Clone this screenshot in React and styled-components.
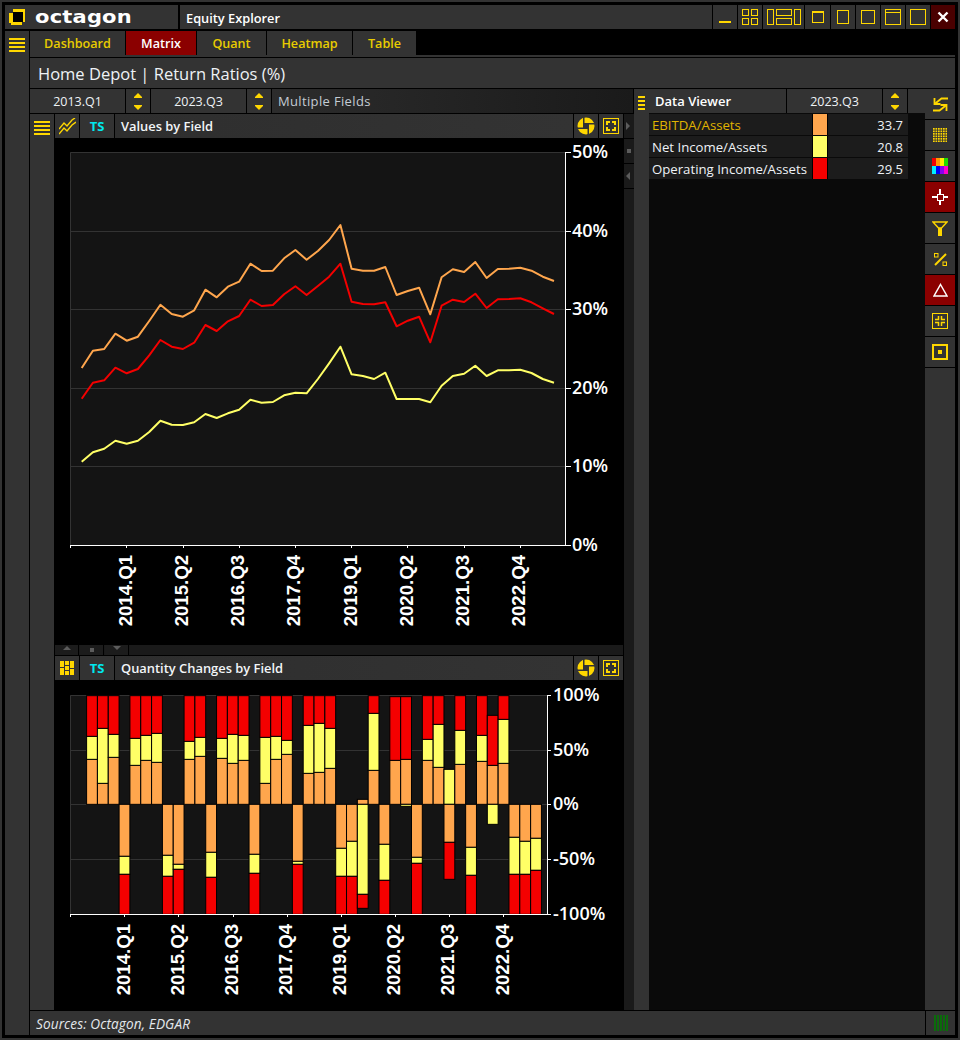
import styled, { createGlobalStyle } from "styled-components";

const GOLD = "#ffd700";
const ORANGE = "#ffa64d";
const YELLOW = "#ffff66";
const RED = "#f40000";

const GlobalStyle = createGlobalStyle`
  html, body { margin: 0; padding: 0; background: #000; }
  * { box-sizing: border-box; }
  body { font-family: "Open Sans", "Noto Sans", sans-serif; color: #fff; }
`;

// y positions read off the picture, 3x from y=200
const orangeLine = [504,452,447,401,422,410,363,314,342,350,331,269,292,260,245,191,213,212,175,150,179,153,120,75,206,212,212,201,285,273,263,343,232,208,216,186,234,207,206,203,212,230,243];
const redLine = [596,548,541,503,520,507,466,420,440,447,428,375,393,364,348,299,318,315,283,259,285,258,230,191,305,312,313,307,379,362,350,427,317,299,306,281,324,298,297,295,307,325,342];
const yellowLine = [785,757,746,722,731,722,696,662,674,675,667,642,654,640,629,599,608,606,586,578,580,537,490,440,523,528,537,518,597,597,597,607,557,528,521,497,528,511,511,509,519,537,548];

// each bar: [up stack ends], [down stack ends], in orange, yellow, red order, 3x from y=680
const ZERO = 373;
const up = (o, y, r) => [[o, y, r], null];
const dn = (o, y, r) => [null, [o, y, r]];
const bars = [
  up(238,169,47), up(310,145,47), up(232,163,47), dn(529,583,703), up(256,175,47), up(241,166,47), up(247,160,47),
  dn(526,589,703), dn(553,568,703), up(238,184,47), up(229,172,47), dn(517,592,703), up(235,175,47), up(250,163,47),
  up(241,166,47), dn(523,580,703), up(310,172,47), up(238,169,47), up(223,181,47), dn(544,553,703), up(280,136,47),
  up(277,130,47), up(265,145,47), dn(505,589,703), dn(484,589,703), [[358,358,358],[373,643,685]], up(271,100,47),
  dn(493,601,703), up(241,241,50), [[238,238,50],[373,379,379]], dn(532,550,703), up(241,178,47), up(262,133,47),
  [[373,268,268],[487,487,598]], up(253,151,47), dn(502,586,703), up(244,166,47), [[256,256,106],[373,433,433]],
  up(250,118,47), dn(472,583,703), dn(484,583,703), dn(475,571,703),
];

const xLabels = ["2014.Q1", "2015.Q2", "2016.Q3", "2017.Q4", "2019.Q1", "2020.Q2", "2021.Q3", "2022.Q4"];

const Window = styled.div`
  width: 960px;
  height: 1040px;
  border: 2px solid #333;
  padding: 3px;
  background: #000;
  display: flex;
  flex-direction: column;
  gap: 2px;
  overflow: hidden;
`;

const TitleBar = styled.div`
  height: 24px;
  display: flex;
  gap: 1px;
  flex: none;
`;

const LogoCell = styled.div`
  width: 173px;
  margin-right: 1px;
  background: #333;
  display: flex;
  align-items: center;
  padding-left: 4px;
  gap: 9px;
`;

const LogoText = styled.span`
  font-family: "DejaVu Sans", sans-serif;
  font-weight: 700;
  font-size: 21px;
  line-height: 24px;
  letter-spacing: 0.2px;
  width: 97px;
  display: inline-block;
  transform: scaleY(0.82);
  transform-origin: center;
`;

const AppName = styled.div`
  flex: 1;
  background: #333;
  padding-left: 6px;
  font-size: 12.8px;
  font-weight: 600;
  line-height: 24px;
  padding-top: 0.5px;
`;

const WinButton = styled.div`
  width: ${(p) => p.$w || 24}px;
  background: ${(p) => (p.$close ? "#4a0000" : "#333")};
  display: flex;
  align-items: center;
  justify-content: center;
`;

const Body = styled.div`
  flex: 1;
  display: flex;
  gap: 1px;
  min-height: 0;
`;

const LeftRail = styled.div`
  width: 24px;
  background: #333;
  display: flex;
  justify-content: center;
  padding-top: 7px;
`;

const Main = styled.div`
  flex: 1;
  display: flex;
  flex-direction: column;
  min-width: 0;
`;

const TabStrip = styled.div`
  height: 26px;
  display: flex;
  border-bottom: 2px solid #333;
  flex: none;
`;

const Tab = styled.div`
  width: ${(p) => p.$w}px;
  height: 24px;
  margin-right: 1px;
  background: ${(p) => (p.$active ? "#8b0000" : "#333")};
  color: ${(p) => (p.$active ? "#fff" : "#e8cc00")};
  font-size: 12.6px;
  font-weight: 600;
  line-height: 25px;
  text-align: center;
`;

const PageTitle = styled.div`
  height: 30px;
  margin-top: 1px;
  background: #333;
  font-size: 16.5px;
  line-height: 32px;
  padding-left: 8px;
  flex: none;
  color: #eef2f6;
`;

const Content = styled.div`
  flex: 1;
  margin-top: 1px;
  display: flex;
  min-height: 0;
`;

const LeftPane = styled.div`
  width: 603px;
  display: flex;
  flex-direction: column;
`;

const SelectorRow = styled.div`
  height: 24px;
  display: flex;
  gap: 1px;
  flex: none;
`;

const PeriodCell = styled.div`
  width: ${(p) => p.$w || 95}px;
  background: #333;
  font-size: 12.5px;
  line-height: 25px;
  text-align: center;
  color: #eef2f6;
`;

const SpinCell = styled.div`
  width: 24px;
  background: #333;
  display: flex;
  align-items: center;
  justify-content: center;
`;

const FieldCell = styled.div`
  flex: 1;
  background: linear-gradient(90deg, #2c2c2c, #1a1a1a);
  font-size: 13px;
  letter-spacing: 0.35px;
  line-height: 25px;
  padding-left: 6px;
  color: #c4ccd4;
`;

const PaneBody = styled.div`
  flex: 1;
  margin-top: 1px;
  display: flex;
  min-height: 0;
`;

const Gutter = styled.div`
  width: 24px;
  margin-right: 1px;
  background: #333;
  display: flex;
  justify-content: center;
  padding-top: 7px;
  flex: none;
`;

const ChartColumn = styled.div`
  width: 568px;
  display: flex;
  flex-direction: column;
  flex: none;
`;

const PanelHeader = styled.div`
  height: 24px;
  display: flex;
  gap: 1px;
  flex: none;
`;

const HeaderIcon = styled.div`
  width: ${(p) => p.$w || 24}px;
  background: #333;
  display: flex;
  align-items: center;
  justify-content: center;
`;

const TsCell = styled.div`
  width: 34px;
  background: #333;
  color: #00e8ee;
  font-size: 13px;
  font-weight: 700;
  line-height: 25px;
  text-align: center;
`;

const PanelTitle = styled.div`
  flex: 1;
  background: linear-gradient(90deg, #2e2e2e, #333);
  font-size: 12.9px;
  font-weight: 600;
  line-height: 25px;
  padding-left: 6px;
  color: #f2f5f8;
`;

const ChartSvg = styled.svg`
  display: block;
  flex: none;
`;

const HSplit = styled.div`
  height: 10px;
  margin-bottom: 1px;
  background: #1a1a1a;
  display: flex;
  gap: 1px;
  flex: none;
`;

const HSplitCell = styled.div`
  width: 24px;
  background: #1c1c1c;
  border-right: 1px solid #000;
  display: flex;
  align-items: center;
  justify-content: center;
`;

const VStrip = styled.div`
  width: 10px;
  margin-left: 1px;
  background: #1a1a1a;
  display: flex;
  flex-direction: column;
  flex: none;
`;

const VStripCell = styled.div`
  height: 25px;
  border-bottom: 1px solid #000;
  display: flex;
  align-items: center;
  justify-content: center;
`;

const VSplit = styled.div`
  width: 15px;
  margin-left: 1px;
  background: #333;
  display: flex;
  justify-content: center;
  padding-top: 7px;
  flex: none;
`;

const RightPane = styled.div`
  width: 276px;
  background: #0a0a0a;
  margin-left: 0;
  flex: none;
`;

const ViewerHeader = styled.div`
  height: 24px;
  display: flex;
  gap: 1px;
  margin-bottom: 1px;
  background: #000;
`;

const ViewerTitle = styled.div`
  width: 137px;
  background: #333;
  font-size: 13px;
  font-weight: 600;
  line-height: 25px;
  padding-left: 6px;
`;

const ViewerRow = styled.div`
  width: 259px;
  height: 21px;
  margin-bottom: 1px;
  display: flex;
  gap: 1px;
  background: #000;
`;

const RowName = styled.div`
  width: 163px;
  background: #1c1c1c;
  font-size: 13.2px;
  line-height: 23px;
  padding-left: 3px;
  white-space: nowrap;
  color: ${(p) => (p.$hi ? "#e0b400" : "#eef2f6")};
`;

const Swatch = styled.div`
  width: 14px;
  background: ${(p) => p.$c};
`;

const RowValue = styled.div`
  flex: 1;
  background: #1c1c1c;
  font-size: 13px;
  line-height: 23px;
  text-align: right;
  padding-right: 5px;
  color: #eef2f6;
`;

const RightRail = styled.div`
  width: 30px;
  background: #333;
  display: flex;
  flex-direction: column;
  flex: none;
`;

const RailButton = styled.div`
  height: 31px;
  border-bottom: 1px solid #000;
  background: ${(p) => (p.$on ? "#8b0000" : "#333")};
  display: flex;
  align-items: center;
  justify-content: center;
`;

const StatusBar = styled.div`
  height: 24px;
  margin-top: 1px;
  display: flex;
  gap: 1px;
  flex: none;
`;

const StatusText = styled.div`
  flex: 1;
  background: #333;
  font-size: 13.6px;
  font-style: italic;
  letter-spacing: 0.1px;
  line-height: 25px;
  padding-left: 6px;
  color: #e4e8ec;
`;

const StatusLed = styled.div`
  width: 29px;
  background: #333;
  display: flex;
  align-items: center;
  justify-content: center;
`;

const AxisValue = styled.text`
  font-family: "Open Sans", sans-serif;
  font-weight: 600;
  font-size: ${(p) => p.$size}px;
  fill: #fff;
  dominant-baseline: central;
`;

const AxisDate = styled.text`
  font-family: "Liberation Sans", sans-serif;
  font-weight: 700;
  font-size: ${(p) => p.$size}px;
  fill: #fff;
  text-anchor: end;
  dominant-baseline: central;
`;

function Hamburger({ bars = 4 }) {
  return (
    <svg width="16" height="14" viewBox="0 0 16 14" fill={GOLD}>
      {Array.from({ length: bars }, (_, i) => (
        <rect key={i} x="0" y={i * 4} width="16" height="2" />
      ))}
    </svg>
  );
}

function MiniBurger() {
  return (
    <svg width="7" height="14" viewBox="0 0 7 14" fill={GOLD}>
      {[0, 4, 8, 12].map((y) => (
        <rect key={y} x="0" y={y} width="7" height="2" />
      ))}
    </svg>
  );
}

function LogoMark() {
  return (
    <svg width="17" height="16" viewBox="0 0 17 16" shapeRendering="crispEdges">
      <path d="M4 0H16V13H13V16H2V14H0V4H4Z" fill={GOLD} />
      <rect x="4" y="3" width="10" height="10" fill="#000" />
    </svg>
  );
}

function Spinner() {
  return (
    <svg width="10" height="17" viewBox="0 0 10 17" fill={GOLD}>
      <path d="M5 0L9 4V5H1V4Z" />
      <path d="M1 12H9V13L5 17L1 13Z" />
    </svg>
  );
}

function LineIcon() {
  return (
    <svg width="17" height="17" viewBox="0 0 17 17" fill="none" stroke={GOLD} strokeWidth="1.4">
      <path d="M0 11L5 5L8 8L13 2L16 0" />
      <path d="M0 16L5 10L8 13L13 7L17 4" />
    </svg>
  );
}

function TileIcon() {
  return (
    <svg width="15" height="15" viewBox="0 0 15 15" fill={GOLD}>
      <rect x="0" y="0" width="4" height="6" />
      <rect x="0" y="7" width="4" height="7" />
      <rect x="5" y="0" width="4" height="4" />
      <rect x="5" y="5" width="4" height="4" />
      <rect x="5" y="10" width="4" height="4" />
      <rect x="10" y="0" width="4" height="7" />
      <rect x="10" y="8" width="4" height="6" />
    </svg>
  );
}

function ApertureIcon() {
  return (
    <svg width="18" height="18" viewBox="0 0 18 18">
      <circle cx="9" cy="9" r="8.5" fill={GOLD} />
      <rect x="6" y="6" width="6" height="6" fill="#333" />
      <rect x="6" y="0" width="1.5" height="6" fill="#333" />
      <rect x="12" y="6" width="6" height="1.5" fill="#333" />
      <rect x="10.5" y="12" width="1.5" height="6" fill="#333" />
      <rect x="0" y="10.5" width="6" height="1.5" fill="#333" />
    </svg>
  );
}

function ExpandIcon() {
  return (
    <svg width="16" height="16" viewBox="0 0 16 16" fill="none" stroke={GOLD} shapeRendering="crispEdges">
      <rect x="0.5" y="0.5" width="15" height="15" />
      <path d="M4 7V4H7M9 4H12V7M12 9V12H9M7 12H4V9" strokeWidth="2" />
    </svg>
  );
}

function Tri({ dir, c = "#5c5c5c" }) {
  const d = {
    up: "M0 4L4 0L8 4Z",
    down: "M0 0H8L4 4Z",
    right: "M1 0L5 4L1 8Z",
    left: "M5 0V8L1 4Z",
  }[dir];
  return (
    <svg width="8" height="8" viewBox="0 0 8 8" fill={c} style={{ overflow: "visible" }}>
      <path d={d} />
    </svg>
  );
}

function Dot() {
  return <svg width="4" height="4"><rect width="4" height="4" fill="#5c5c5c" /></svg>;
}

function WinIcon({ w = 16, h = 16, children }) {
  return (
    <svg width={w} height={h} viewBox={`0 0 ${w} ${h}`} fill="none" stroke={GOLD} strokeWidth="1">
      {children}
    </svg>
  );
}

function PaletteIcon() {
  const colors = ["#f00000", "#ff9900", "#ffee00", "#22dd00", "#00eeff", "#0000ee", "#8800ee", "#ff00cc"];
  return (
    <svg width="16" height="16" viewBox="0 0 16 16" shapeRendering="crispEdges">
      {colors.map((c, i) => (
        <rect key={c} x={(i % 4) * 4} y={i < 4 ? 0 : 8} width="4" height="8" fill={c} />
      ))}
    </svg>
  );
}

function DotGridIcon() {
  const dots = [];
  for (let r = 0; r < 6; r++) {
    for (let c = 0; c < 6; c++) dots.push(<rect key={`${r}-${c}`} x={c * 2.5} y={r * 2.5} width="1.7" height="1.7" />);
  }
  return <svg width="14" height="14" viewBox="0 0 14 14" fill={GOLD}>{dots}</svg>;
}

function SyncIcon() {
  return (
    <svg width="15" height="15" viewBox="0 0 15 15" fill="none" stroke={GOLD} strokeWidth="1.8">
      <path d="M15 1.5H8.5L1.5 7" />
      <path d="M1.5 1V7H7.5" />
      <path d="M0 13.5H6.5L13.5 8" />
      <path d="M13.5 14V8H7.5" />
    </svg>
  );
}

function CrossIcon() {
  return (
    <svg width="16" height="16" viewBox="0 0 16 16" fill="#fff" shapeRendering="crispEdges">
      <rect x="7" y="0" width="2" height="5" />
      <rect x="7" y="11" width="2" height="5" />
      <rect x="0" y="7" width="5" height="2" />
      <rect x="11" y="7" width="5" height="2" />
      <rect x="5" y="5" width="6" height="6" fill="none" stroke="#fff" />
    </svg>
  );
}

function FunnelIcon() {
  return (
    <svg width="16" height="15" viewBox="0 0 16 15">
      <path d="M1 1H15L9.5 7H6.5Z" fill="none" stroke={GOLD} strokeWidth="1.4" />
      <rect x="6" y="7" width="4" height="8" fill={GOLD} />
    </svg>
  );
}

function PercentIcon() {
  return (
    <svg width="13" height="13" viewBox="0 0 13 13" fill="none" stroke={GOLD}>
      <path d="M1 12L12 1" strokeWidth="2" />
      <rect x="0.5" y="0.5" width="3.5" height="3.5" />
      <rect x="9" y="9" width="3.5" height="3.5" />
    </svg>
  );
}

function DeltaIcon() {
  return (
    <svg width="15" height="14" viewBox="0 0 15 14">
      <path d="M7.5 1.5L14 13H1Z" fill="none" stroke="#fff" strokeWidth="1.5" />
    </svg>
  );
}

function ShrinkIcon() {
  return (
    <svg width="16" height="16" viewBox="0 0 16 16" fill="none" stroke={GOLD}>
      <rect x="0.5" y="0.5" width="15" height="15" />
      <path d="M6.5 3V6.5H3M9.5 3V6.5H13M6.5 13V9.5H3M9.5 13V9.5H13" strokeWidth="1.5" />
    </svg>
  );
}

function TargetIcon() {
  return (
    <svg width="16" height="16" viewBox="0 0 16 16" fill="none">
      <rect x="1" y="1" width="14" height="14" stroke={GOLD} strokeWidth="2" />
      <rect x="6" y="6" width="4" height="4" fill={GOLD} />
    </svg>
  );
}

function PanelIcons() {
  return (
    <>
      <HeaderIcon><ApertureIcon /></HeaderIcon>
      <HeaderIcon><ExpandIcon /></HeaderIcon>
    </>
  );
}

function LinePath({ data, color }) {
  const points = data.map((v, i) => `${(81.7 + i * 11.246).toFixed(1)},${(200 + v / 3).toFixed(1)}`).join(" ");
  return <polyline points={points} fill="none" stroke={color} strokeWidth="2" strokeLinejoin="round" />;
}

function ValuesChart() {
  const grid = [231, 309, 388, 466];
  const labels = [["50%", 152], ["40%", 231], ["30%", 309], ["20%", 388], ["10%", 466], ["0%", 545]];
  return (
    <ChartSvg width="568" height="507" viewBox="55 138 568 507">
      <rect x="70" y="152" width="495" height="393" fill="#141414" />
      <path d="M70.5 545V152.5H565" fill="none" stroke="#333" />
      {grid.map((y) => (
        <path key={y} d={`M70 ${y + 0.5}H565`} stroke="#333" />
      ))}
      <LinePath data={yellowLine} color={YELLOW} />
      <LinePath data={orangeLine} color={ORANGE} />
      <LinePath data={redLine} color={RED} />
      <path d="M565.5 152V545.5H70" fill="none" stroke="#fff" />
      {labels.map(([t, y]) => (
        <g key={t}>
          <path d={`M565 ${y + 0.5}H571`} stroke="#fff" />
          <AxisValue x="572" y={y - 1} $size="18">{t}</AxisValue>
        </g>
      ))}
      <path d="M70.5 545V548" stroke="#fff" />
      {xLabels.map((t, i) => {
        const x = 126.3 + i * 56.2;
        return (
          <g key={t}>
            <path d={`M${Math.round(x) + 0.5} 545V548`} stroke="#fff" />
            <AxisDate transform={`translate(${x - 1} 555) rotate(-90)`} $size="18.6">{t}</AxisDate>
          </g>
        );
      })}
    </ChartSvg>
  );
}

function StackBar({ x, stack, from }) {
  const colors = [ORANGE, YELLOW, RED];
  let last = from;
  return stack.map((end, i) => {
    const y1 = Math.min(last, end);
    const h = Math.abs(end - last);
    last = end;
    if (h === 0) return null;
    return (
      <rect
        key={i}
        x={x}
        y={680 + y1 / 3}
        width="10.8"
        height={h / 3}
        fill={colors[i]}
        stroke="#000"
        strokeWidth="1"
      />
    );
  });
}

function ChangesChart() {
  const labels = [["100%", 695], ["50%", 750], ["0%", 804], ["-50%", 859], ["-100%", 914]];
  return (
    <ChartSvg width="568" height="330" viewBox="55 680 568 330">
      <rect x="70" y="695" width="477" height="219" fill="#141414" />
      <path d="M70.5 914V695.5H547" fill="none" stroke="#333" />
      {[750, 804, 859].map((y) => (
        <path key={y} d={`M70 ${y + 0.5}H547`} stroke="#333" />
      ))}
      {bars.map(([u, d], i) => {
        const x = 86.6 + i * 10.83;
        return (
          <g key={i}>
            {u && <StackBar x={x} stack={u} from={ZERO} />}
            {d && <StackBar x={x} stack={d} from={ZERO} />}
          </g>
        );
      })}
      <path d="M547.5 695V914.5H70" fill="none" stroke="#fff" />
      {labels.map(([t, y]) => (
        <g key={t}>
          <path d={`M547 ${y + 0.5}H551`} stroke="#fff" />
          <AxisValue x="553" y={y - 1} $size="18">{t}</AxisValue>
        </g>
      ))}
      <path d="M70.5 914V917" stroke="#fff" />
      {xLabels.map((t, i) => {
        const x = 124.3 + i * 54.1;
        return (
          <g key={t}>
            <path d={`M${Math.round(x) + 0.5} 914V917`} stroke="#fff" />
            <AxisDate transform={`translate(${x - 1} 924) rotate(-90)`} $size="18.6">{t}</AxisDate>
          </g>
        );
      })}
    </ChartSvg>
  );
}

const tabs = [
  ["Dashboard", 95],
  ["Matrix", 70, true],
  ["Quant", 69],
  ["Heatmap", 85],
  ["Table", 63],
];

const rows = [
  ["EBITDA/Assets", ORANGE, "33.7", true],
  ["Net Income/Assets", YELLOW, "20.8"],
  ["Operating Income/Assets", RED, "29.5"],
];

export default function App() {
  return (
    <Window>
      <GlobalStyle />
      <TitleBar>
        <LogoCell>
          <LogoMark />
          <LogoText>octagon</LogoText>
        </LogoCell>
        <AppName>Equity Explorer</AppName>
        <WinButton>
          <WinIcon w={12} h={12}><path d="M0 11H12" strokeWidth="2" /></WinIcon>
        </WinButton>
        <WinButton>
          <WinIcon>
            <rect x="0.5" y="0.5" width="6" height="6" />
            <rect x="9.5" y="0.5" width="6" height="6" />
            <rect x="0.5" y="9.5" width="6" height="6" />
            <rect x="9.5" y="9.5" width="6" height="6" />
          </WinIcon>
        </WinButton>
        <WinButton $w={41}>
          <WinIcon w={34}>
            <rect x="0.5" y="0.5" width="6" height="15" />
            <rect x="9.5" y="0.5" width="15" height="6" />
            <rect x="9.5" y="9.5" width="15" height="6" />
            <rect x="27.5" y="0.5" width="6" height="15" />
          </WinIcon>
        </WinButton>
        <WinButton $w={25}>
          <WinIcon w={12} h={12}><rect x="0.5" y="0.5" width="11" height="11" /><path d="M0 1H12" strokeWidth="2" /></WinIcon>
        </WinButton>
        <WinButton>
          <WinIcon w={12} h={14}><rect x="0.5" y="0.5" width="11" height="13" /></WinIcon>
        </WinButton>
        <WinButton>
          <WinIcon w={14} h={14}><rect x="0.5" y="0.5" width="13" height="13" /></WinIcon>
        </WinButton>
        <WinButton>
          <WinIcon><rect x="0.5" y="0.5" width="15" height="15" /><path d="M0 3.5H16" /></WinIcon>
        </WinButton>
        <WinButton>
          <WinIcon><rect x="0.5" y="0.5" width="15" height="15" /></WinIcon>
        </WinButton>
        <WinButton $close>
          <svg width="12" height="12" viewBox="0 0 12 12" stroke="#fff" strokeWidth="2.4"><path d="M1.5 1.5L10.5 10.5M10.5 1.5L1.5 10.5" /></svg>
        </WinButton>
      </TitleBar>
      <Body>
        <LeftRail><Hamburger /></LeftRail>
        <Main>
          <TabStrip>
            {tabs.map(([t, w, active]) => (
              <Tab key={t} $w={w} $active={active}>{t}</Tab>
            ))}
          </TabStrip>
          <PageTitle>Home Depot | Return Ratios (%)</PageTitle>
          <Content>
            <LeftPane>
              <SelectorRow>
                <PeriodCell>2013.Q1</PeriodCell>
                <SpinCell><Spinner /></SpinCell>
                <PeriodCell>2023.Q3</PeriodCell>
                <SpinCell><Spinner /></SpinCell>
                <FieldCell>Multiple Fields</FieldCell>
              </SelectorRow>
              <PaneBody>
                <Gutter><Hamburger /></Gutter>
                <ChartColumn>
                  <PanelHeader>
                    <HeaderIcon><LineIcon /></HeaderIcon>
                    <TsCell>TS</TsCell>
                    <PanelTitle>Values by Field</PanelTitle>
                    <PanelIcons />
                  </PanelHeader>
                  <ValuesChart />
                  <HSplit>
                    <HSplitCell><Tri dir="up" /></HSplitCell>
                    <HSplitCell><Dot /></HSplitCell>
                    <HSplitCell><Tri dir="down" /></HSplitCell>
                  </HSplit>
                  <PanelHeader>
                    <HeaderIcon><TileIcon /></HeaderIcon>
                    <TsCell>TS</TsCell>
                    <PanelTitle>Quantity Changes by Field</PanelTitle>
                    <PanelIcons />
                  </PanelHeader>
                  <ChangesChart />
                </ChartColumn>
                <VStrip>
                  <VStripCell><Tri dir="right" /></VStripCell>
                  <VStripCell><Dot /></VStripCell>
                  <VStripCell><Tri dir="left" /></VStripCell>
                </VStrip>
              </PaneBody>
            </LeftPane>
            <VSplit><MiniBurger /></VSplit>
            <RightPane>
              <ViewerHeader>
                <ViewerTitle>Data Viewer</ViewerTitle>
                <PeriodCell>2023.Q3</PeriodCell>
                <SpinCell><Spinner /></SpinCell>
                <PeriodCell $w={17} />
              </ViewerHeader>
              {rows.map(([name, c, v, hi]) => (
                <ViewerRow key={name}>
                  <RowName $hi={hi}>{name}</RowName>
                  <Swatch $c={c} />
                  <RowValue>{v}</RowValue>
                </ViewerRow>
              ))}
            </RightPane>
            <RightRail>
              <RailButton><SyncIcon /></RailButton>
              <RailButton><DotGridIcon /></RailButton>
              <RailButton><PaletteIcon /></RailButton>
              <RailButton $on><CrossIcon /></RailButton>
              <RailButton><FunnelIcon /></RailButton>
              <RailButton><PercentIcon /></RailButton>
              <RailButton $on><DeltaIcon /></RailButton>
              <RailButton><ShrinkIcon /></RailButton>
              <RailButton><TargetIcon /></RailButton>
            </RightRail>
          </Content>
          <StatusBar>
            <StatusText>Sources: Octagon, EDGAR</StatusText>
            <StatusLed>
              <svg width="14" height="16" viewBox="0 0 14 16" fill="#0b6b0b">
                {[0, 3, 6, 9, 12].map((x) => (
                  <rect key={x} x={x} y="0" width="2" height="16" />
                ))}
              </svg>
            </StatusLed>
          </StatusBar>
        </Main>
      </Body>
    </Window>
  );
}
